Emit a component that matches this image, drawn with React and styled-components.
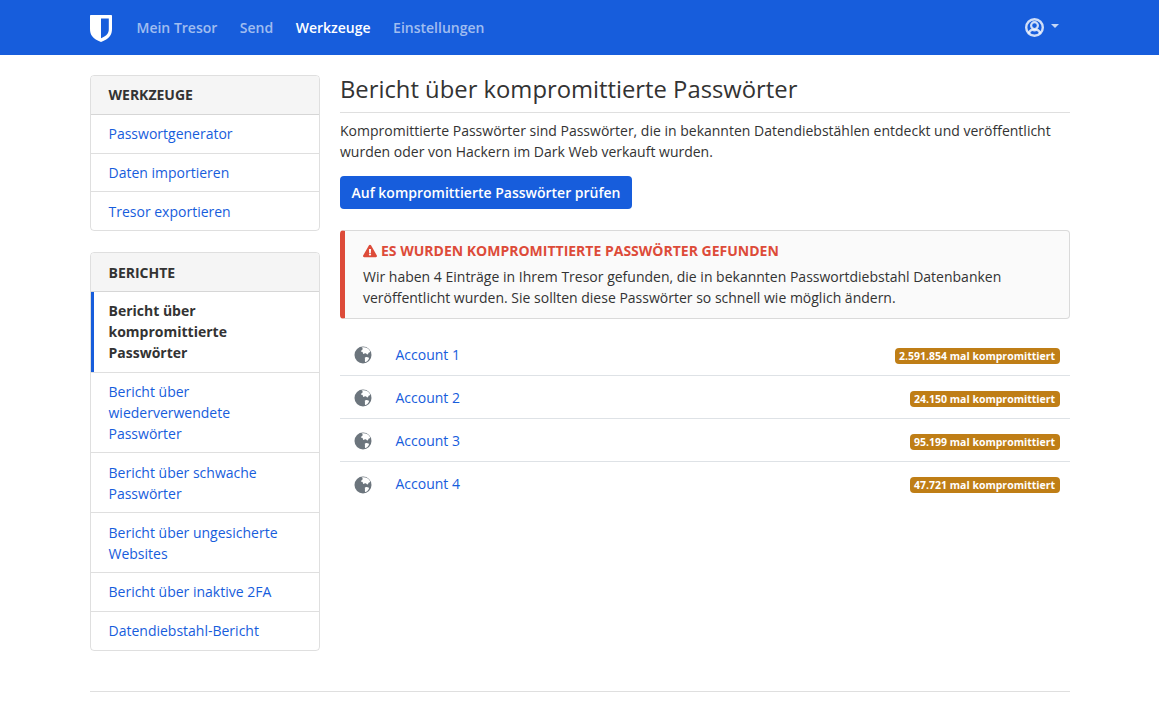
import React from "react";
import styled, { createGlobalStyle } from "styled-components";
import { FaExclamationTriangle } from "react-icons/fa";

const GlobalStyle = createGlobalStyle`
  * { box-sizing: border-box; }
  body {
    margin: 0;
    background: #fff;
    color: #333;
    font-family: "Open Sans", "Liberation Sans", sans-serif;
    font-size: 14px;
    line-height: 1.5;
  }
`;

const NavBar = styled.nav`
  height: 55px;
  background: #175ddc;
`;

const Container = styled.div`
  width: 1010px;
  margin: 0 auto;
  padding: 0 15px;
`;

const NavInner = styled(Container)`
  display: flex;
  align-items: center;
  height: 55px;
`;

const Brand = styled.div`
  display: flex;
  width: 47px;
  padding-top: 1px;
`;

const NavLink = styled.a`
  margin-right: 22.5px;
  font-weight: 600;
  font-size: 14px;
  color: ${(props) => (props.active ? "#fff" : "rgba(255, 255, 255, 0.6)")};
`;

const Account = styled.div`
  display: flex;
  align-items: center;
  gap: 7px;
  margin-left: auto;
  margin-right: 11px;
  color: rgba(255, 255, 255, 0.8);
`;

const Caret = styled.span`
  width: 0;
  height: 0;
  margin-bottom: 3px;
  border-left: 4px solid transparent;
  border-right: 4px solid transparent;
  border-top: 4px solid rgba(255, 255, 255, 0.75);
`;

const Page = styled(Container)`
  display: grid;
  grid-template-columns: 230px 1fr;
  gap: 20.5px;
  padding-top: 20px;
  padding-bottom: 40px;
`;

const Sidebar = styled.aside`
  display: flex;
  flex-direction: column;
  gap: 21px;
`;

const Card = styled.section`
  border: 1px solid rgba(0, 0, 0, 0.125);
  border-radius: 4px;
  overflow: hidden;
`;

const CardHeader = styled.div`
  padding: 8.4px 18px;
  background: #f5f5f5;
  border-bottom: 1px solid rgba(0, 0, 0, 0.125);
  font-weight: 700;
  color: #333;
  text-transform: uppercase;
`;

const SideItem = styled.a`
  display: block;
  padding: 8.4px 18px;
  color: ${(props) => (props.active ? "#333" : "#175ddc")};
  font-weight: ${(props) => (props.active ? 700 : 400)};
  border-top: 1px solid rgba(0, 0, 0, 0.125);
  box-shadow: ${(props) => (props.active ? "inset 3px 0 0 #175ddc" : "none")};
  &:first-of-type {
    border-top: 0;
  }
`;

const Main = styled.main`
  min-width: 0;
`;

const Title = styled.h1`
  margin: 0 0 7.5px;
  padding-bottom: 8px;
  border-bottom: 1px solid rgba(0, 0, 0, 0.125);
  font-size: 23.8px;
  font-weight: 400;
  line-height: 1.2;
  color: #333;
`;

const Intro = styled.p`
  margin: 0 0 14px;
`;

const PrimaryButton = styled.button`
  display: block;
  height: 33px;
  padding: 0 11.5px;
  border: 0;
  border-radius: 4px;
  background: #175ddc;
  color: #fff;
  font: 600 14px "Open Sans", sans-serif;
`;

const Callout = styled.div`
  margin: 21px 0 14px;
  padding: 9px 18px 10px 18px;
  background: #fafafa;
  border: 1px solid rgba(0, 0, 0, 0.125);
  border-left: 5px solid #dd4b39;
  border-radius: 4px;
`;

const CalloutTitle = styled.div`
  display: flex;
  align-items: center;
  gap: 4px;
  margin-bottom: 5px;
  font-weight: 700;
  color: #dd4b39;
  text-transform: uppercase;
`;

const Row = styled.div`
  display: flex;
  align-items: center;
  height: 43px;
  padding-right: 10px;
  border-bottom: 1px solid #dee2e6;
  &:last-child {
    border-bottom: 0;
  }
`;

const GlobeCell = styled.span`
  display: flex;
  width: 55.5px;
  padding-left: 14px;
  margin-top: 2px;
  color: #6c757d;
`;

const RowLink = styled.a`
  color: #175ddc;
`;

const Badge = styled.span`
  margin: 3px 0 0 auto;
  padding: 0 4.5px;
  height: 16px;
  border-radius: 4px;
  background: #bf7e16;
  color: #fff;
  font-size: 10.5px;
  font-weight: 700;
  line-height: 16px;
`;

const FooterRule = styled.div`
  border-top: 1px solid rgba(0, 0, 0, 0.125);
`;

const Shield = () => (
  <svg width="22" height="27" viewBox="0 0 22 27">
    <path
      fill="#fff"
      fillRule="evenodd"
      d="M1 0h20c.6 0 1 .4 1 1v13c0 3-.7 5.300-2.200 7.300C18 23.600 15 25.500 11 27c-4-1.500-7-3.400-8.800-5.700C.7 19.300 0 17 0 14V1c0-.6.4-1 1-1zm10 3.400v19.900c2.900-1.200 5.100-2.600 6.300-4.200 1-1.400 1.500-3 1.500-5V3.400H11z"
    />
  </svg>
);

const UserIcon = () => (
  <svg width="19" height="19" viewBox="0 0 19 19" fill="none" stroke="currentColor">
    <circle cx="9.500" cy="9.500" r="8.300" strokeWidth="2.400" />
    <circle cx="9.500" cy="7.600" r="3.400" strokeWidth="2.200" />
    <path
      strokeWidth="2.200"
      d="M4 15.500c.4-2.500 2-3.700 3.300-3.700.8.400 1.400.5 2.200.5s1.400-.1 2.200-.5c1.300 0 2.900 1.200 3.300 3.700"
    />
  </svg>
);

const GlobeIcon = () => (
  <svg width="18" height="18" viewBox="0 0 18 18">
    <circle cx="9" cy="9" r="8.500" fill="currentColor" />
    <path
      fill="#fff"
      d="M7.500 1.600c1.500-.5 4-.4 5.500.4 1.500.9 2.700 2.200 3.200 3.700-.6.800-1.200.5-1.700 1.200-.4.600-.3 1.500-1.100 1.500-.9 0-1-1-1.900-1.100-1 0-1.200.9-2 .7-.9-.3-.4-1.400-1-1.900-.6-.6-1.400 0-1.600-.8-.1-.8 1-1 1.500-1.600.3-.5.100-1.600.100-2.600z"
    />
    <path
      fill="#fff"
      d="M11.500 11.200c1-.4 2.200-.2 3 .3.600.4.600 1.100.200 1.700-.7 1.200-1.800 2.300-3 2.900-.7.100-.8-.9-.8-1.600 0-.9.300-1.500-.1-2.200-.3-.5.200-.9.700-1.100z"
    />
  </svg>
);

const toolLinks = ["Passwortgenerator", "Daten importieren", "Tresor exportieren"];

const reportLinks = [
  "Bericht über kompromittierte Passwörter",
  "Bericht über wiederverwendete Passwörter",
  "Bericht über schwache Passwörter",
  "Bericht über ungesicherte Websites",
  "Bericht über inaktive 2FA",
  "Datendiebstahl-Bericht",
];

const accounts = [
  ["Account 1", "2.591.854"],
  ["Account 2", "24.150"],
  ["Account 3", "95.199"],
  ["Account 4", "47.721"],
];

const App = () => (
  <>
    <GlobalStyle />
    <NavBar>
      <NavInner>
        <Brand>
          <Shield />
        </Brand>
        <NavLink>Mein Tresor</NavLink>
        <NavLink>Send</NavLink>
        <NavLink active>Werkzeuge</NavLink>
        <NavLink>Einstellungen</NavLink>
        <Account>
          <UserIcon />
          <Caret />
        </Account>
      </NavInner>
    </NavBar>

    <Page>
      <Sidebar>
        <Card>
          <CardHeader>Werkzeuge</CardHeader>
          {toolLinks.map((label) => (
            <SideItem key={label}>{label}</SideItem>
          ))}
        </Card>
        <Card>
          <CardHeader>Berichte</CardHeader>
          {reportLinks.map((label, i) => (
            <SideItem key={label} active={i === 0}>
              {label}
            </SideItem>
          ))}
        </Card>
      </Sidebar>

      <Main>
        <Title>Bericht über kompromittierte Passwörter</Title>
        <Intro>
          Kompromittierte Passwörter sind Passwörter, die in bekannten
          Datendiebstählen entdeckt und veröffentlicht wurden oder von Hackern
          im Dark Web verkauft wurden.
        </Intro>
        <PrimaryButton>Auf kompromittierte Passwörter prüfen</PrimaryButton>
        <Callout>
          <CalloutTitle>
            <FaExclamationTriangle size={14} />
            Es wurden kompromittierte Passwörter gefunden
          </CalloutTitle>
          Wir haben 4 Einträge in Ihrem Tresor gefunden, die in bekannten
          Passwortdiebstahl Datenbanken veröffentlicht wurden. Sie sollten diese
          Passwörter so schnell wie möglich ändern.
        </Callout>
        {accounts.map(([name, count]) => (
          <Row key={name}>
            <GlobeCell>
              <GlobeIcon />
            </GlobeCell>
            <RowLink>{name}</RowLink>
            <Badge>{count} mal kompromittiert</Badge>
          </Row>
        ))}
      </Main>
    </Page>

    <Container>
      <FooterRule />
    </Container>
  </>
);

export default App;
